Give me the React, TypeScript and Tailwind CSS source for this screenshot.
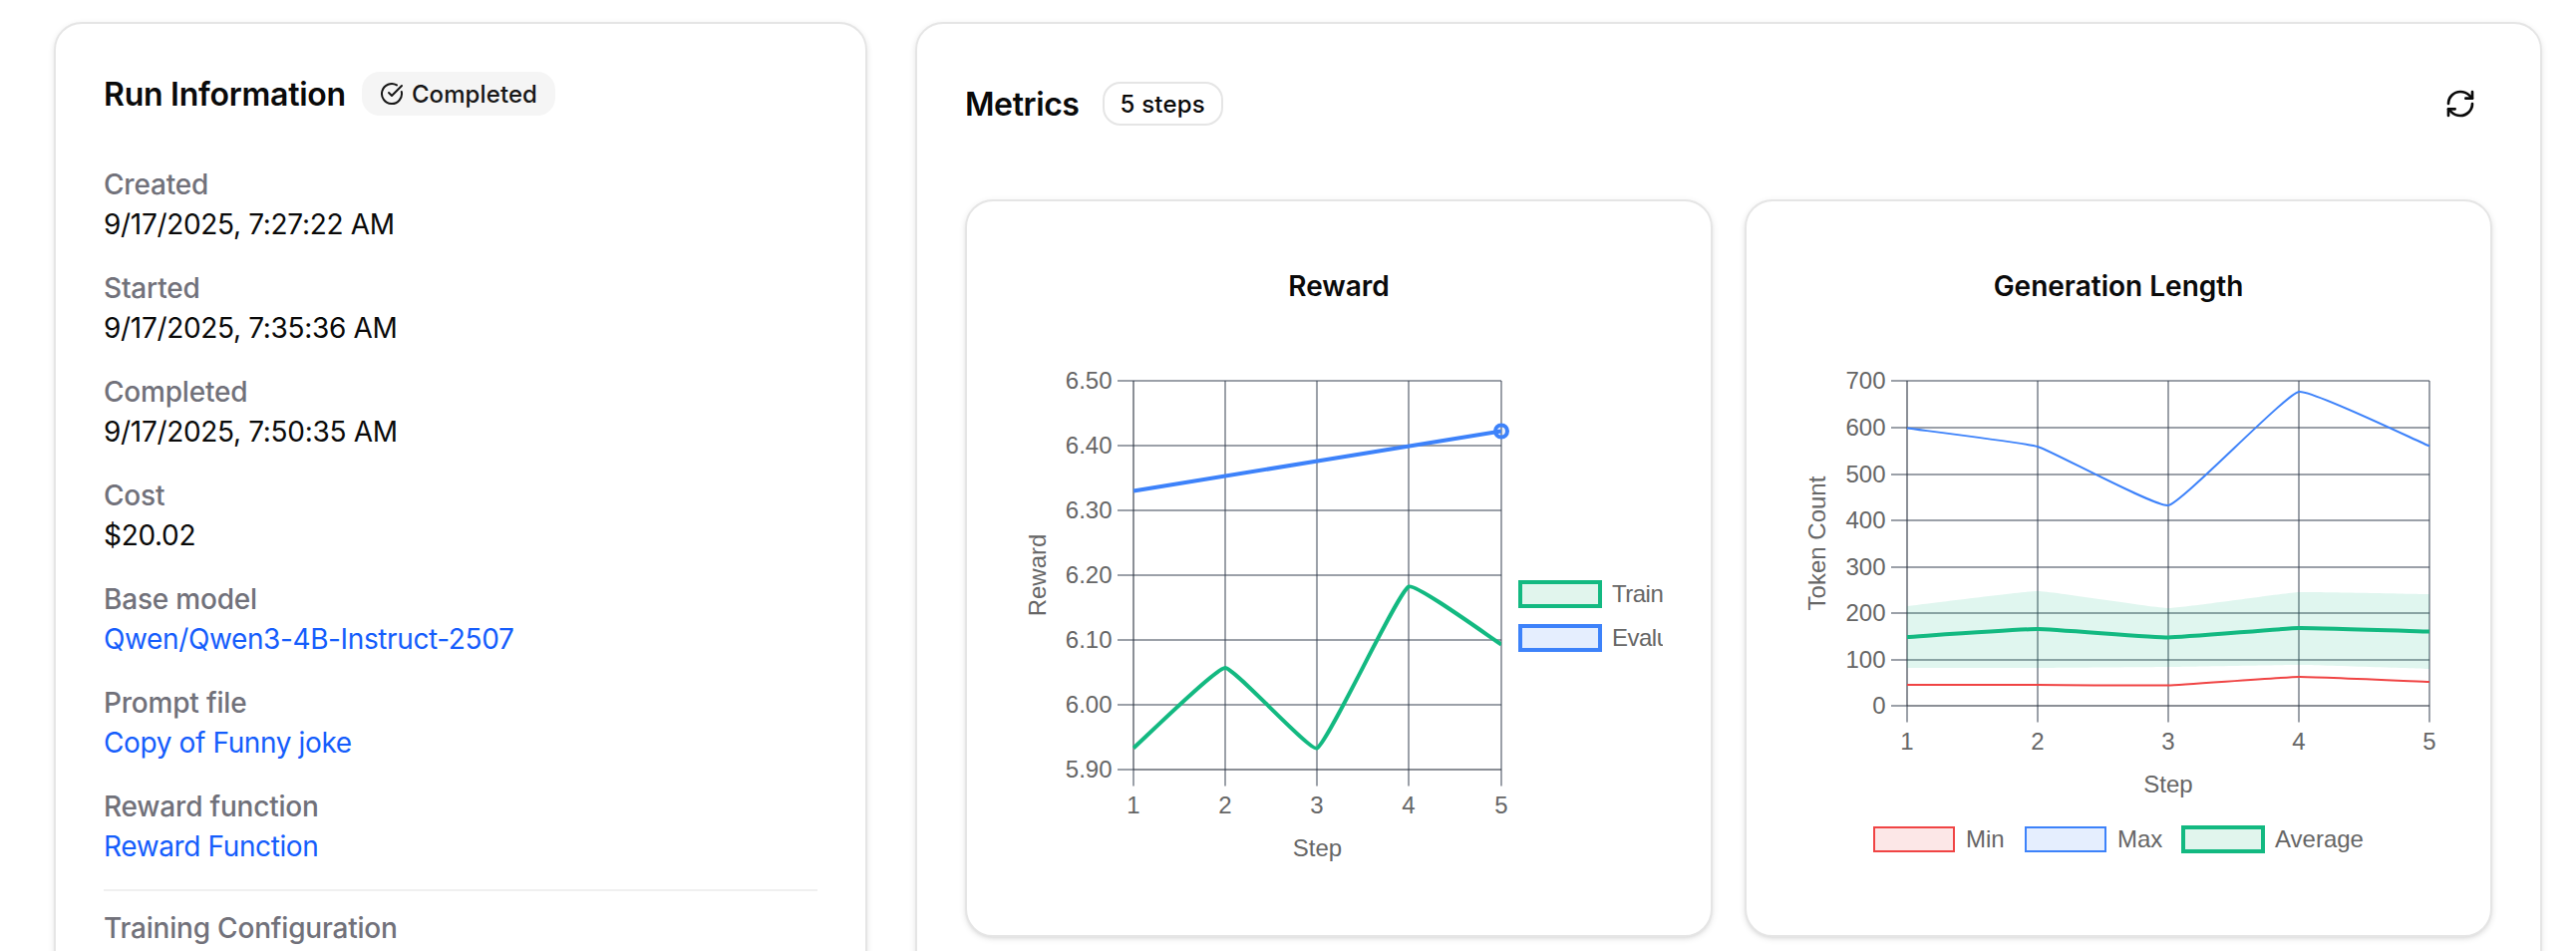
import type { ReactNode } from "react";
import { CircleCheckBig, RefreshCw } from "lucide-react";

type Point = [number, number];

interface InfoItem {
  label: string;
  value: string;
  isLink?: boolean;
}

interface Series {
  label: string;
  color: string;
  fill: string;
  width: number;
  points: Point[];
}

const RUN_INFO: InfoItem[] = [
  { label: "Created", value: "9/17/2025, 7:27:22 AM" },
  { label: "Started", value: "9/17/2025, 7:35:36 AM" },
  { label: "Completed", value: "9/17/2025, 7:50:35 AM" },
  { label: "Cost", value: "$20.02" },
  { label: "Base model", value: "Qwen/Qwen3-4B-Instruct-2507", isLink: true },
  { label: "Prompt file", value: "Copy of Funny joke", isLink: true },
  { label: "Reward function", value: "Reward Function", isLink: true },
];

const GREEN = "#13b981";
const BLUE = "#3d82fa";
const RED = "#f04444";

const REWARD_SERIES: Series[] = [
  {
    label: "Train",
    color: GREEN,
    fill: "#e1f5ed",
    width: 4,
    points: [[119, 450.5], [211, 370], [303, 450.5], [395, 288.5], [488, 346.5]],
  },
  {
    label: "Evaluation",
    color: BLUE,
    fill: "#e5eefe",
    width: 4,
    points: [[119, 192.5], [488, 132.5]],
  },
];

const LENGTH_SERIES: Series[] = [
  {
    label: "Min",
    color: RED,
    fill: "#fce7e7",
    width: 2,
    points: [[113, 387], [244, 387], [375, 387.5], [506, 379], [637, 384]],
  },
  {
    label: "Max",
    color: BLUE,
    fill: "#e5eefe",
    width: 2,
    points: [[113, 129.5], [244, 148], [375, 207], [506, 93], [637, 147.5]],
  },
  {
    label: "Average",
    color: GREEN,
    fill: "#e1f5ed",
    width: 4,
    points: [[113, 339], [244, 331], [375, 339.5], [506, 330], [637, 333.5]],
  },
];

const BAND_TOP: Point[] = [[113, 308], [244, 293], [375, 310], [506, 294], [637, 296]];
const BAND_BOTTOM: Point[] = [[637, 371], [506, 367], [375, 369], [244, 370], [113, 370]];

// Cubic segments through the points, with slightly rounded corners.
function curve(points: Point[], tension = 0.1) {
  const controls = points.map((p, i) => {
    const prev = points[Math.max(i - 1, 0)];
    const next = points[Math.min(i + 1, points.length - 1)];
    const d01 = Math.hypot(p[0] - prev[0], p[1] - prev[1]);
    const d12 = Math.hypot(next[0] - p[0], next[1] - p[1]);
    const a = (tension * d01) / (d01 + d12);
    const b = (tension * d12) / (d01 + d12);
    const dx = next[0] - prev[0];
    const dy = next[1] - prev[1];
    return { before: [p[0] - a * dx, p[1] - a * dy], after: [p[0] + b * dx, p[1] + b * dy] };
  });
  return points
    .map((p, i) => (i === 0 ? p.join(" ") : `C${controls[i - 1].after.join(" ")} ${controls[i].before.join(" ")} ${p.join(" ")}`))
    .join("");
}

interface AxesProps {
  xs: number[];
  ys: number[];
  yLabels: string[];
}

function Axes({ xs, ys, yLabels }: AxesProps) {
  const left = xs[0];
  const right = xs[xs.length - 1];
  const top = ys[0];
  const bottom = ys[ys.length - 1];
  return (
    <>
      <g stroke="#374151" strokeOpacity={0.5} strokeWidth={2}>
        {xs.map((x) => (
          <line key={x} x1={x} x2={x} y1={top} y2={bottom + 16.5} />
        ))}
        {ys.map((y) => (
          <line key={y} x1={left - 16} x2={right} y1={y} y2={y} />
        ))}
      </g>
      <g stroke="#000" strokeOpacity={0.1} strokeWidth={2}>
        <line x1={left} x2={left} y1={top} y2={bottom} />
        <line x1={left} x2={right} y1={bottom} y2={bottom} />
      </g>
      {xs.map((x, i) => (
        <text key={x} x={x} y={bottom + 44} textAnchor="middle">
          {i + 1}
        </text>
      ))}
      {ys.map((y, i) => (
        <text key={y} x={left - 21.5} y={y + 8} textAnchor="end">
          {yLabels[i]}
        </text>
      ))}
      <text x={(left + right) / 2} y={bottom + 87} textAnchor="middle">
        Step
      </text>
    </>
  );
}

interface LegendItemProps {
  series: Series;
  x: number;
  y: number;
}

function LegendItem({ series, x, y }: LegendItemProps) {
  return (
    <>
      <rect x={x} y={y} width={80} height={24} fill={series.fill} stroke={series.color} strokeWidth={series.width} />
      <text x={x + 92} y={y + 20}>
        {series.label}
      </text>
    </>
  );
}

const CHART_CLASS =
  "block h-[580px] w-full overflow-hidden fill-[#666] font-['Liberation_Sans',Arial,sans-serif] text-[24px]";

function RewardChart() {
  return (
    <svg viewBox="0 7 650 580" className={CHART_CLASS}>
      <Axes
        xs={[119, 211, 303, 395, 488]}
        ys={[82, 147, 212, 277, 342, 407, 472]}
        yLabels={["6.50", "6.40", "6.30", "6.20", "6.10", "6.00", "5.90"]}
      />
      <text transform="translate(30.5 277) rotate(-90)" textAnchor="middle">
        Reward
      </text>
      <clipPath id="reward-area">
        <rect x={118} y={82} width={370} height={390} />
      </clipPath>
      <g clipPath="url(#reward-area)" fill="none">
        {REWARD_SERIES.map((s) => (
          <path key={s.label} d={`M${curve(s.points)}`} stroke={s.color} strokeWidth={s.width} />
        ))}
      </g>
      <circle cx={488} cy={132.5} r={6} fill={BLUE} fillOpacity={0.1} stroke={BLUE} strokeWidth={4} />
      <g className="tracking-[-0.5px]">
        {REWARD_SERIES.map((s, i) => (
          <LegendItem key={s.label} series={s} x={507} y={284 + i * 44} />
        ))}
      </g>
    </svg>
  );
}

function LengthChart() {
  return (
    <svg viewBox="0 7 650 580" className={CHART_CLASS}>
      <Axes
        xs={[113, 244, 375, 506, 637]}
        ys={[82, 129, 176, 222, 269, 315, 362, 408]}
        yLabels={["700", "600", "500", "400", "300", "200", "100", "0"]}
      />
      <text transform="translate(30.5 245) rotate(-90)" textAnchor="middle">
        Token Count
      </text>
      {/* Spread around the average */}
      <path d={`M${curve(BAND_TOP)}L${curve(BAND_BOTTOM)}Z`} fill={GREEN} fillOpacity={0.13} />
      <g fill="none">
        {LENGTH_SERIES.map((s) => (
          <path key={s.label} d={`M${curve(s.points)}`} stroke={s.color} strokeWidth={s.width} />
        ))}
      </g>
      <LegendItem series={LENGTH_SERIES[0]} x={80} y={530} />
      <LegendItem series={LENGTH_SERIES[1]} x={232} y={530} />
      <LegendItem series={LENGTH_SERIES[2]} x={390} y={530} />
    </svg>
  );
}

interface ChartCardProps {
  title: string;
  children: ReactNode;
}

function ChartCard({ title, children }: ChartCardProps) {
  return (
    <div className="h-[740px] rounded-[28px] border-2 border-[#e5e5e5] bg-white px-12 pt-[65px] shadow-[0_2px_6px_rgba(0,0,0,0.1),0_2px_4px_-2px_rgba(0,0,0,0.1)]">
      <h3 className="text-center text-[28px] leading-10 font-semibold">{title}</h3>
      {children}
    </div>
  );
}

export default function App() {
  return (
    <main className="flex h-[954px] items-start gap-12 overflow-hidden bg-white pt-[22px] pl-[54px] font-[Inter,sans-serif] text-[#0a0a0a]">
      <aside className="h-[1100px] w-[816px] shrink-0 rounded-[28px] border-2 border-[#e5e5e5] bg-white px-12 pt-12 shadow-[0_2px_6px_rgba(0,0,0,0.1)]">
        <div className="flex h-11 items-center gap-4">
          <h2 className="pt-0.5 text-[32px] leading-11 font-semibold tracking-[-0.25px]">Run Information</h2>
          <span className="flex h-11 items-center gap-2 rounded-[18px] bg-[#f5f5f5] px-[18px] text-[24px] font-medium tracking-[0.1px] text-[#171717]">
            <CircleCheckBig className="size-6" />
            <span className="pt-0.5">Completed</span>
          </span>
        </div>
        <dl className="mt-[49px] flex flex-col gap-6">
          {RUN_INFO.map((item) => (
            <div key={item.label} className="text-[28px] leading-10">
              <dt className="font-medium tracking-[-0.2px] text-[#71717a]">{item.label}</dt>
              <dd className={item.isLink ? "tracking-[-0.38px] text-[#155dfc]" : "tracking-[-0.32px]"}>{item.value}</dd>
            </div>
          ))}
        </dl>
        <div className="mt-[23px] border-t-2 border-[#f0f0f0] pt-[17px]">
          <h3 className="text-[28px] leading-10 font-medium tracking-[-0.2px] text-[#71717a]">Training Configuration</h3>
        </div>
      </aside>

      <section className="h-[1100px] w-[1632px] shrink-0 rounded-[28px] border-2 border-[#e5e5e5] bg-white px-12 pt-12 shadow-[0_2px_6px_rgba(0,0,0,0.1)]">
        <div className="flex h-16 items-center">
          <h2 className="pt-0.5 text-[32px] font-semibold tracking-[-0.4px]">Metrics</h2>
          <span className="ml-[23px] flex h-11 items-center rounded-[18px] border-2 border-[#e5e5e5] px-4 pt-0.5 text-[24px] font-medium tracking-[0.2px]">
            5 steps
          </span>
          <button type="button" aria-label="Refresh metrics" className="ml-auto flex size-16 items-center justify-center">
            <RefreshCw className="size-8" />
          </button>
        </div>
        <div className="mt-16 grid grid-cols-2 gap-8">
          <ChartCard title="Reward">
            <RewardChart />
          </ChartCard>
          <ChartCard title="Generation Length">
            <LengthChart />
          </ChartCard>
        </div>
      </section>
    </main>
  );
}
